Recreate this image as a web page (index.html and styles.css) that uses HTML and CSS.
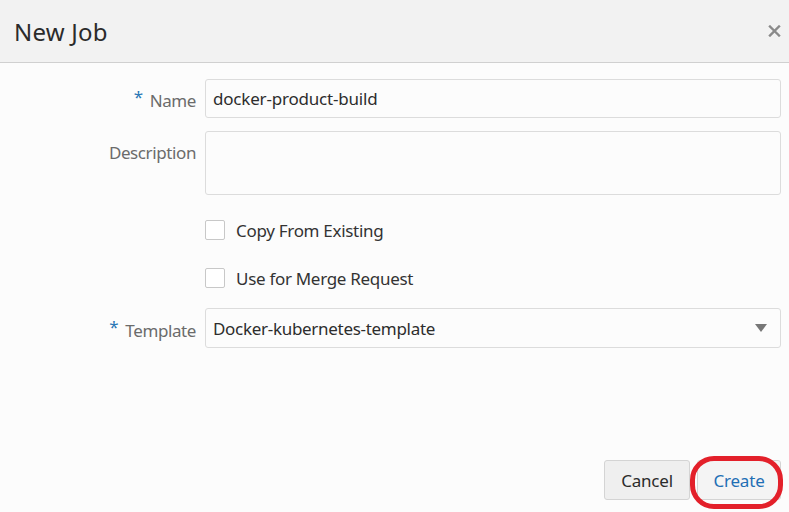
FILE: index.html
```html
<!DOCTYPE html>
<html>
<head>
<meta charset="utf-8">
<link rel="stylesheet" href="styles.css">
</head>
<body>
<div class="dialog">
  <div class="header">
    <h1 class="title">New Job</h1>
    <svg class="close" width="13" height="12" viewBox="0 0 13 12"><path d="M2 1.5 L11 10.5 M11 1.5 L2 10.5" stroke="#8a8a8a" stroke-width="2.4" stroke-linecap="square"/></svg>
  </div>
  <div class="body">
    <div class="form">
      <div class="row name-row">
        <label class="label"><span class="req">*</span> Name</label>
        <div class="field input">docker-product-build</div>
      </div>
      <div class="row desc-row">
        <label class="label desc-label">Description</label>
        <div class="field textarea"></div>
      </div>
      <div class="row check-row first">
        <span class="label"></span>
        <div class="check"><span class="box"></span><span>Copy From Existing</span></div>
      </div>
      <div class="row check-row second">
        <span class="label"></span>
        <div class="check"><span class="box"></span><span>Use for Merge Request</span></div>
      </div>
      <div class="row tpl-row">
        <label class="label"><span class="req">*</span> Template</label>
        <div class="field select"><span>Docker-kubernetes-template</span><span class="caret"></span></div>
      </div>
    </div>
    <div class="footer">
      <button class="btn">Cancel</button>
      <div class="highlight-wrap">
        <button class="btn create">Create</button>
        <span class="highlight"></span>
      </div>
    </div>
  </div>
</div>
</body>
</html>
```

FILE: styles.css
```css
* { box-sizing: border-box; }
html, body { margin: 0; padding: 0; }
body {
  width: 789px;
  height: 512px;
  overflow: hidden;
  background: #fcfcfc;
  font-family: "Noto Sans", "Open Sans", sans-serif;
  color: #333;
}
.dialog { display: flex; flex-direction: column; height: 512px; }
.header {
  height: 63px;
  background: #f2f2f2;
  border-bottom: 1px solid #d0d0d0;
  display: flex;
  align-items: center;
  justify-content: space-between;
  padding: 0 8px 0 14px;
}
.title {
  margin: 0;
  font-weight: 400;
  font-size: 24px;
  color: #2b2b2b;
  letter-spacing: 0.2px;
}
.close { display: block; }
.body {
  flex: 1;
  display: flex;
  flex-direction: column;
  justify-content: space-between;
  padding: 16px 8px 12px 0;
}
.form { display: flex; flex-direction: column; }
.row { display: flex; align-items: center; gap: 9px; }
.label {
  width: 196px;
  flex: none;
  text-align: right;
  font-size: 17px;
  line-height: 22px;
  color: #6b6b6b;
  letter-spacing: -0.4px;
}
.req { color: #2a77b5; vertical-align: 4px; font-size: 17px; margin-right: 3px; }
.field {
  flex: 1;
  border: 1px solid #dcdcdc;
  border-radius: 3px;
  background: #fcfcfc;
  font-size: 17px;
  color: #2d2d2d;
  letter-spacing: -0.2px;
}
.name-row .label { padding-top: 1px; }
.input { height: 39px; line-height: 37px; padding-left: 7px; }
.desc-row { margin-top: 13px; align-items: flex-start; }
.desc-label { padding-top: 11px; }
.textarea { height: 64px; }
.check-row { height: 20px; }
.check-row.first { margin-top: 25px; }
.check-row.second { margin-top: 28px; }
.check {
  display: flex;
  align-items: center;
  gap: 11px;
  font-size: 17px;
  color: #333;
  letter-spacing: -0.3px;
}
.box {
  width: 20px; height: 20px;
  border: 1px solid #c8c8c8;
  border-radius: 2px;
  background: #fff;
  flex: none;
}
.tpl-row { margin-top: 20px; }
.tpl-row .label { padding-top: 1px; }
.select {
  height: 40px;
  display: flex;
  align-items: center;
  justify-content: space-between;
  padding: 0 13px 0 7px;
  letter-spacing: -0.3px;
}
.caret {
  width: 0; height: 0;
  border-left: 6px solid transparent;
  border-right: 6px solid transparent;
  border-top: 8px solid #777;
}
.footer {
  display: flex;
  justify-content: flex-end;
  gap: 7px;
}
.btn {
  height: 40px;
  border: 1px solid #d4d4d4;
  border-radius: 3px;
  background: #efefef;
  font-family: inherit;
  font-size: 17px;
  color: #2b2b2b;
  padding: 0;
  letter-spacing: -0.2px;
  width: 86px;
}
.highlight-wrap { position: relative; }
.btn.create {
  width: 84px;
  background: #f4f4f4;
  color: #1f6fb5;
}
.highlight {
  position: absolute;
  left: -7px; top: -4px;
  width: 93px; height: 53px;
  border: 5px solid #e3202a;
  border-radius: 24px;
}
```
